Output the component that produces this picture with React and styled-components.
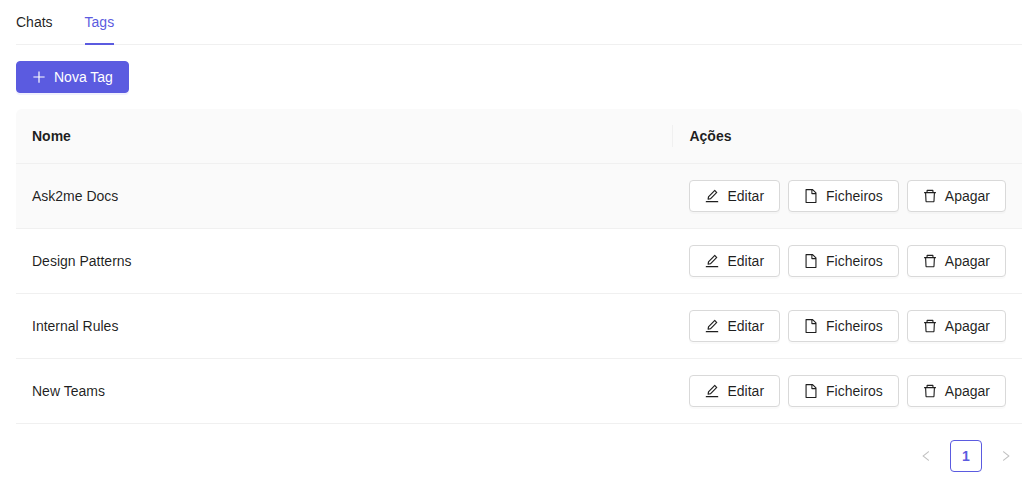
import React, { useState } from "react";
import styled, { createGlobalStyle } from "styled-components";
import {
  AiOutlineDelete,
  AiOutlineEdit,
  AiOutlineFile,
  AiOutlineLeft,
  AiOutlinePlus,
  AiOutlineRight,
} from "react-icons/ai";

const GlobalStyle = createGlobalStyle`
  *,
  *::before,
  *::after {
    box-sizing: border-box;
  }

  body {
    margin: 0;
    background: #ffffff;
    color: rgba(0, 0, 0, 0.88);
    font-family: "Liberation Sans", Arial, sans-serif;
    font-size: 14px;
    line-height: 22px;
  }

  button {
    font: inherit;
    cursor: pointer;
  }
`;

const Page = styled.main`
  display: flex;
  flex-direction: column;
  gap: 16px;
  padding: 0 14px 16px 16px;
`;

const TabBar = styled.div`
  display: flex;
  gap: 32px;
  border-bottom: 1px solid #f0f0f0;
`;

const Tab = styled.button`
  margin-bottom: -1px;
  padding: 11px 0 10px;
  border: none;
  border-bottom: 2px solid ${({ $active }) => ($active ? "#5b5be0" : "transparent")};
  background: none;
  color: ${({ $active }) => ($active ? "#5b5be0" : "inherit")};
`;

const Button = styled.button`
  display: inline-flex;
  align-items: center;
  gap: 8px;
  height: 32px;
  padding: 0 15px;
  border: 1px solid ${({ $primary }) => ($primary ? "#5b5be0" : "#d9d9d9")};
  border-radius: 4px;
  background: ${({ $primary }) => ($primary ? "#5b5be0" : "#ffffff")};
  box-shadow: 0 2px 0
    ${({ $primary }) => ($primary ? "rgba(5, 5, 255, 0.06)" : "rgba(0, 0, 0, 0.02)")};
  color: ${({ $primary }) => ($primary ? "#ffffff" : "rgba(0, 0, 0, 0.88)")};
  white-space: nowrap;
`;

const Toolbar = styled.div`
  display: flex;
`;

const Table = styled.table`
  width: 100%;
  border-collapse: separate;
  border-spacing: 0;
`;

const HeadCell = styled.th`
  position: relative;
  padding: 16px;
  border-bottom: 1px solid #f0f0f0;
  background: #fafafa;
  font-weight: 600;
  text-align: left;

  &:first-child {
    width: 100%;
    border-top-left-radius: 6px;
  }

  &:last-child {
    border-top-right-radius: 6px;
  }

  /* column divider */
  &:not(:last-child)::after {
    content: "";
    position: absolute;
    top: 50%;
    right: 0;
    width: 1px;
    height: 22px;
    background: #f0f0f0;
    transform: translateY(-50%);
  }
`;

const Row = styled.tr`
  background: ${({ $highlighted }) => ($highlighted ? "#fafafa" : "#ffffff")};
`;

const Cell = styled.td`
  padding: 16px;
  border-bottom: 1px solid #f0f0f0;
`;

const Actions = styled.div`
  display: flex;
  gap: 8px;
`;

const Pagination = styled.nav`
  display: flex;
  justify-content: flex-end;
  gap: 8px;
`;

const PageButton = styled.button`
  display: flex;
  align-items: center;
  justify-content: center;
  width: 32px;
  height: 32px;
  padding: 0;
  border: 1px solid ${({ $current }) => ($current ? "#5b5be0" : "transparent")};
  border-radius: 4px;
  background: none;
  color: ${({ $current }) => ($current ? "#5b5be0" : "rgba(0, 0, 0, 0.25)")};
  font-weight: ${({ $current }) => ($current ? 600 : 400)};
`;

const tabs = ["Chats", "Tags"];
const tags = ["Ask2me Docs", "Design Patterns", "Internal Rules", "New Teams"];

// trims the empty margin that the icon set leaves around each glyph
const Icon = ({ as: Glyph, size = 14 }) => (
  <Glyph size={size} viewBox="64 64 896 896" aria-hidden="true" />
);

const TagRow = ({ name, highlighted }) => (
  <Row $highlighted={highlighted}>
    <Cell>{name}</Cell>
    <Cell>
      <Actions>
        <Button type="button">
          <Icon as={AiOutlineEdit} />
          Editar
        </Button>
        <Button type="button">
          <Icon as={AiOutlineFile} />
          Ficheiros
        </Button>
        <Button type="button">
          <Icon as={AiOutlineDelete} />
          Apagar
        </Button>
      </Actions>
    </Cell>
  </Row>
);

const App = () => {
  const [activeTab, setActiveTab] = useState("Tags");

  return (
    <>
      <GlobalStyle />
      <Page>
        <TabBar role="tablist">
          {tabs.map((tab) => (
            <Tab
              key={tab}
              type="button"
              role="tab"
              aria-selected={tab === activeTab}
              $active={tab === activeTab}
              onClick={() => setActiveTab(tab)}
            >
              {tab}
            </Tab>
          ))}
        </TabBar>
        <Toolbar>
          <Button type="button" $primary>
            <Icon as={AiOutlinePlus} />
            Nova Tag
          </Button>
        </Toolbar>
        <Table>
          <thead>
            <tr>
              <HeadCell scope="col">Nome</HeadCell>
              <HeadCell scope="col">Ações</HeadCell>
            </tr>
          </thead>
          <tbody>
            {tags.map((tag, index) => (
              <TagRow key={tag} name={tag} highlighted={index === 0} />
            ))}
          </tbody>
        </Table>
        <Pagination aria-label="Paginação">
          <PageButton type="button" aria-label="Página anterior" disabled>
            <Icon as={AiOutlineLeft} size={12} />
          </PageButton>
          <PageButton type="button" aria-current="page" $current>
            1
          </PageButton>
          <PageButton type="button" aria-label="Página seguinte" disabled>
            <Icon as={AiOutlineRight} size={12} />
          </PageButton>
        </Pagination>
      </Page>
    </>
  );
};

export default App;
